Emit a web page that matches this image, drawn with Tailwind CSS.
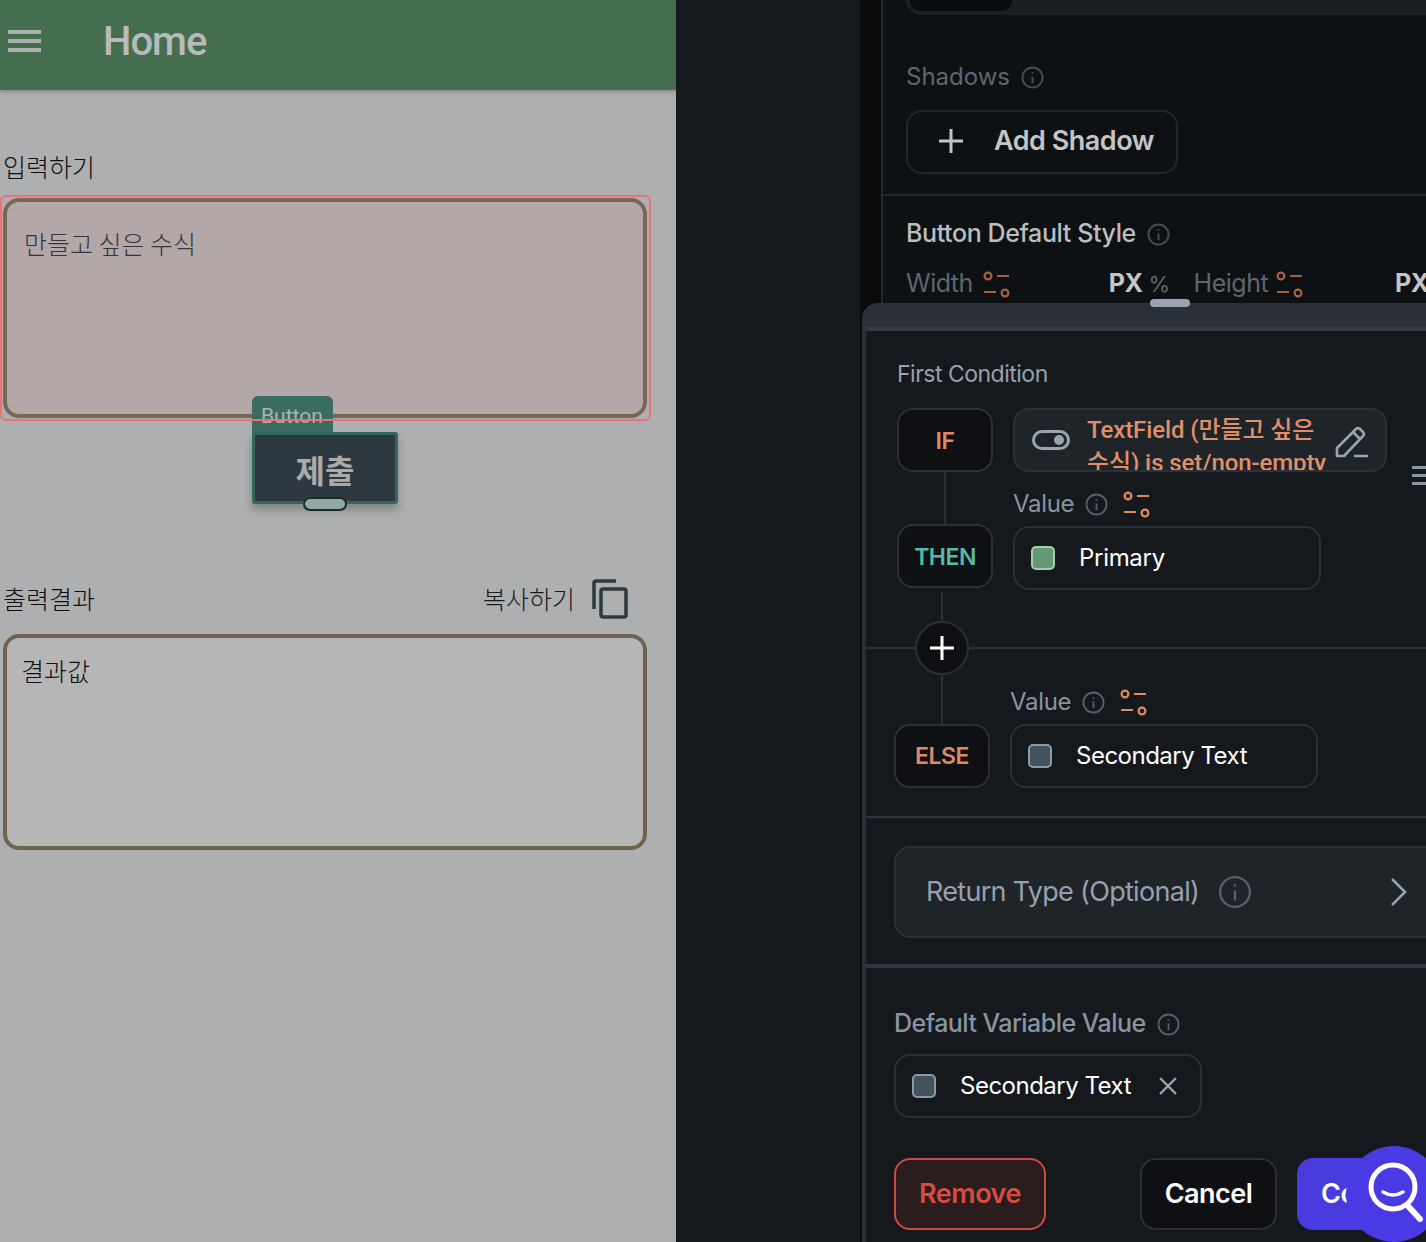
<!DOCTYPE html>
<html lang="en">
<head>
  <meta charset="UTF-8">
  <meta name="viewport" content="width=device-width, initial-scale=1.0">
  <title>Conditional Value</title>
  <script src="https://cdn.jsdelivr.net/npm/@tailwindcss/browser@4"></script>
</head>
<body class="bg-[#14191e]">
  <div class="relative flex w-[1426px] h-[1242px] overflow-hidden font-['Inter','Noto_Sans_CJK_KR',sans-serif] tracking-[-0.5px]">

    <!-- phone canvas -->
    <div class="w-[676px] shrink-0 bg-[#aeafb1] font-['Noto_Sans_CJK_KR',sans-serif] tracking-normal">
      <header class="flex items-center h-[90px] pb-2 bg-[#456e4f] shadow-[0_2px_4px_rgba(0,0,0,0.25)]">
        <div class="flex flex-col gap-[5px] ml-2 w-[33px]">
          <span class="h-1 bg-[#aeb0b2]"></span>
          <span class="h-1 bg-[#aeb0b2]"></span>
          <span class="h-1 bg-[#aeb0b2]"></span>
        </div>
        <h1 class="ml-[62px] pt-px text-[40px] font-medium tracking-[-1px] text-[#b8b9ba] font-['Roboto',sans-serif]">Home</h1>
      </header>

      <p class="mt-[57px] ml-[3px] text-[25px] leading-[38px] text-[#0e1012] font-light">입력하기</p>

      <div class="relative mt-[13px] ml-[3px] w-[644px] h-[220px] rounded-2xl border-4 border-[#7a6556] bg-[#b3a7a8] pl-[17px] pt-[23px]">
        <p class="text-[25px] leading-[36px] font-light text-[#34383c]">만들고 싶은 수식</p>
        <!-- selection outline -->
        <div class="absolute -left-[7px] -top-[7px] w-[651px] h-[226px] rounded-md border-2 border-[#f07075] z-20"></div>
        <!-- widget tag + button -->
        <div class="absolute left-[245px] top-[194px] w-[81px] h-[40px] rounded-t-md bg-[#3b6c62] pl-[9px] text-[21px] leading-[40px] text-[#a9b5b1] font-['Roboto',sans-serif] overflow-hidden z-10">Button</div>
        <div class="absolute left-[245px] top-[230px] flex items-center justify-center w-[146px] h-[72px] pt-[2px] rounded-[3px] border-[3px] border-[#32665e] bg-[#2d3840] text-[32px] font-bold text-[#aaaaaa] shadow-[0_6px_8px_rgba(0,0,0,0.25)] z-10">제출
          <span class="absolute left-[48px] top-[62px] w-[44px] h-[14px] rounded-full border-2 border-[#1d2a2b] bg-[#93a9a4]"></span>
        </div>
      </div>

      <div class="flex items-center mt-[161px] ml-[3px] h-[40px] w-[625px]">
        <p class="text-[25px] font-light text-[#0e1012]">출력결과</p>
        <p class="ml-auto text-[25px] font-light text-[#191d20]">복사하기</p>
        <svg class="ml-[17px]" width="36" height="40" viewBox="0 0 36 40" fill="none" stroke="#2d3a42" stroke-width="3.5">
          <path d="M2 30V4a2 2 0 0 1 2-2h20"/>
          <rect x="9" y="10" width="25" height="28" rx="2"/>
        </svg>
      </div>

      <div class="mt-[15px] ml-[3px] w-[644px] h-[216px] rounded-2xl border-4 border-[#6f6350] bg-[#b6b6b6] pl-[14px] pt-[14px]">
        <p class="text-[25px] leading-[36px] font-light text-[#0e1012]">결과값</p>
      </div>
    </div>

    <!-- middle gutter -->
    <div class="w-[184px] shrink-0 bg-[#14191e]"></div>
    <div class="w-[21px] shrink-0 bg-[#090b0d]"></div>

    <!-- properties panel -->
    <div class="relative flex-1 border-l-2 border-[#22272d] bg-[#0d1114]">
      <div class="relative ml-[23px] h-[15px] rounded-bl-2xl bg-[#1a1f23]">
        <div class="ml-1 w-[102px] h-[11px] rounded-b-xl bg-[#0a0c0f]"></div>
      </div>

      <div class="flex items-center gap-[11px] mt-[49px] ml-[23px] h-[26px]">
        <span class="text-[24px] tracking-normal text-[#5e6670]">Shadows</span>
        <svg width="23" height="23" viewBox="0 0 24 24" fill="none" stroke="#454c55" stroke-width="2"><circle cx="12" cy="12" r="10.5"/><path d="M12 11v7M12 6.5v1.5"/></svg>
      </div>

      <button class="flex items-center mt-[20px] ml-[23px] w-[272px] h-[64px] rounded-2xl border-2 border-[#21262c] pl-[30px] pb-[2px] text-[27px] font-semibold text-[#c4c5c7]">
        <svg width="26" height="26" viewBox="0 0 26 26" fill="none" stroke="#c4c5c7" stroke-width="3"><path d="M13 1v24M1 13h24"/></svg>
        <span class="ml-[30px]">Add Shadow</span>
      </button>

      <div class="mt-[20px] h-[2px] bg-[#21262c]"></div>

      <div class="flex items-center gap-[11px] mt-[23px] ml-[23px] h-[30px]">
        <span class="text-[25px] font-medium tracking-[-0.4px] text-[#bcbdc0]">Button Default Style</span>
        <svg width="23" height="23" viewBox="0 0 24 24" fill="none" stroke="#454c55" stroke-width="2"><circle cx="12" cy="12" r="10.5"/><path d="M12 11v7M12 6.5v1.5"/></svg>
      </div>

      <div class="flex items-center mt-[18px] ml-[23px] h-[34px] text-[25px] text-[#5e6670] whitespace-nowrap">
        <span>Width</span>
        <svg class="ml-[10px]" width="27" height="27" viewBox="0 0 27 27" fill="none" stroke="#a5623f" stroke-width="2.2"><circle cx="5" cy="5" r="3.4"/><path d="M14 5h12M1 21h12"/><circle cx="22" cy="22" r="3.4"/></svg>
        <span class="ml-[99px] font-bold text-[#c4c5c7]">PX</span>
        <span class="ml-[6px] text-[22px]">%</span>
        <span class="ml-[24px]">Height</span>
        <svg class="ml-[8px]" width="27" height="27" viewBox="0 0 27 27" fill="none" stroke="#a5623f" stroke-width="2.2"><circle cx="5" cy="5" r="3.4"/><path d="M14 5h12M1 21h12"/><circle cx="22" cy="22" r="3.4"/></svg>
        <span class="ml-[92px] font-bold text-[#c4c5c7]">PX</span>
      </div>
    </div>

    <!-- conditional value sheet -->
    <div class="absolute left-[862px] top-[303px] w-[564px] h-[939px] rounded-tl-2xl border-l-4 border-t-[24px] border-[#2a2f38] bg-[#15191d] overflow-hidden">
      <div class="h-1 bg-[#353a45]"></div>

      <div class="relative pl-[31px] pt-[28px] h-[487px] border-b-2 border-[#2f343e]">
        <p class="text-[23px] leading-[30px] text-[#98a0ae]">First Condition</p>

        <div class="flex gap-5 mt-[19px]">
          <div class="flex items-center justify-center w-[96px] h-[64px] pt-[2px] rounded-2xl border-2 border-[#2b3038] bg-[#0e1013] text-[23px] font-semibold text-[#df8a63]">IF</div>
          <div class="relative flex items-center w-[374px] h-[64px] rounded-2xl border-2 border-[#2b3038] bg-[#1f2429] overflow-hidden">
            <svg class="ml-[17px] shrink-0" width="38" height="20" viewBox="0 0 38 20" fill="none"><rect x="1.5" y="1.5" width="35" height="17" rx="8.5" stroke="#9aa3b2" stroke-width="3"/><circle cx="27" cy="10" r="5" fill="#9aa3b2"/></svg>
            <p class="ml-[17px] w-[240px] self-start pt-[4px] text-[24px] leading-[33px] font-medium font-['Roboto','Noto_Sans_CJK_KR',sans-serif] tracking-[-0.1px] text-[#df8f6a]">TextField (만들고 싶은 수식) is set/non-empty</p>
            <svg class="absolute left-[319px] top-[16px]" width="36" height="32" viewBox="0 0 36 32" fill="none" stroke="#9aa3b2" stroke-width="2.6" stroke-linejoin="round"><path d="M3 22 22 3a3 3 0 0 1 4 0l3 3a3 3 0 0 1 0 4L10 30H3zM19 6l7 7M20 30h14"/></svg>
          </div>
        </div>

        <!-- reorder handle at right edge -->
        <div class="absolute left-[546px] top-[135px] flex flex-col gap-[5px] w-[14px]">
          <span class="h-[3px] bg-[#8d96a3]"></span>
          <span class="h-[3px] bg-[#8d96a3]"></span>
          <span class="h-[3px] bg-[#8d96a3]"></span>
        </div>

        <div class="relative flex items-center gap-[11px] ml-[116px] h-[52px] pt-[12px] text-[24px] tracking-[-0.3px] text-[#8a93a0]">
          <span class="absolute -left-[69px] top-0 w-[2px] h-[52px] bg-[#2b3038]"></span>
          <span>Value</span>
          <svg width="23" height="23" viewBox="0 0 24 24" fill="none" stroke="#565e69" stroke-width="2"><circle cx="12" cy="12" r="10.5"/><path d="M12 11v7M12 6.5v1.5"/></svg>
          <svg class="ml-[4px]" width="27" height="27" viewBox="0 0 27 27" fill="none" stroke="#df8a63" stroke-width="2.2"><circle cx="5" cy="5" r="3.4"/><path d="M14 5h12M1 21h12"/><circle cx="22" cy="22" r="3.4"/></svg>
        </div>

        <div class="flex items-start gap-5">
          <div class="flex items-center justify-center w-[96px] h-[64px] pt-[2px] rounded-2xl border-2 border-[#2b3038] bg-[#0e1013] text-[23px] font-semibold text-[#53bba6]">THEN</div>
          <div class="flex items-center mt-[2px] w-[308px] h-[64px] rounded-2xl border-2 border-[#2b3038] pl-[16px] text-[24px] tracking-[-0.3px] text-white">
            <span class="w-6 h-6 rounded-[5px] border-2 border-[#a3cdb0] bg-[#639a73]"></span>
            <span class="ml-6">Primary</span>
          </div>
        </div>

        <div class="relative h-[134px]">
          <span class="absolute left-[-31px] right-0 top-[57px] h-[2px] bg-[#2b3038]"></span>
          <span class="absolute left-[44px] top-[2px] w-[2px] h-[132px] bg-[#2b3038]"></span>
          <span class="absolute left-[18px] top-[31px] flex items-center justify-center w-[54px] h-[54px] rounded-full border-2 border-[#2b3038] bg-[#0e1013]">
            <svg width="26" height="26" viewBox="0 0 26 26" fill="none" stroke="#ffffff" stroke-width="3"><path d="M13 1v24M1 13h24"/></svg>
          </span>
          <div class="absolute left-[113px] top-[97px] flex items-center gap-[11px] h-[30px] text-[24px] tracking-[-0.3px] text-[#8a93a0]">
            <span>Value</span>
            <svg width="23" height="23" viewBox="0 0 24 24" fill="none" stroke="#565e69" stroke-width="2"><circle cx="12" cy="12" r="10.5"/><path d="M12 11v7M12 6.5v1.5"/></svg>
            <svg class="ml-[4px]" width="27" height="27" viewBox="0 0 27 27" fill="none" stroke="#df8a63" stroke-width="2.2"><circle cx="5" cy="5" r="3.4"/><path d="M14 5h12M1 21h12"/><circle cx="22" cy="22" r="3.4"/></svg>
          </div>
        </div>

        <div class="flex gap-5 -ml-[3px]">
          <div class="flex items-center justify-center w-[96px] h-[64px] rounded-2xl border-2 border-[#2b3038] bg-[#0e1013] text-[23px] font-semibold text-[#df8a63]">ELSE</div>
          <div class="flex items-center w-[308px] h-[64px] rounded-2xl border-2 border-[#2b3038] pl-[16px] text-[24px] text-white">
            <span class="w-6 h-6 rounded-[5px] border-2 border-[#8d9aa3] bg-[#43535e]"></span>
            <span class="ml-6">Secondary Text</span>
          </div>
        </div>
      </div>

      <div class="h-[150px] pl-[28px] pt-[28px] border-b-4 border-[#2f343e]">
        <div class="flex items-center w-[560px] h-[92px] rounded-2xl border-2 border-[#2b3038] bg-[#1f2429] pl-[30px] text-[27px] tracking-[-0.7px] text-[#98a0ae]">
          <span>Return Type (Optional)</span>
          <svg class="ml-[19px]" width="34" height="34" viewBox="0 0 24 24" fill="none" stroke="#565e69" stroke-width="1.7"><circle cx="12" cy="12" r="10.5"/><path d="M12 11v7M12 6.5v1.5"/></svg>
          <svg class="ml-[137px]" width="19" height="30" viewBox="0 0 19 30" fill="none" stroke="#98a0ae" stroke-width="2.6"><path d="M3 2l13 13L3 28"/></svg>
        </div>
      </div>

      <div class="pl-[28px] pt-[41px]">
        <div class="flex items-center gap-[11px] h-[30px]">
          <span class="text-[25px] font-medium tracking-[-0.55px] text-[#8a93a0]">Default Variable Value</span>
          <svg width="23" height="23" viewBox="0 0 24 24" fill="none" stroke="#565e69" stroke-width="2"><circle cx="12" cy="12" r="10.5"/><path d="M12 11v7M12 6.5v1.5"/></svg>
        </div>
        <div class="flex items-center mt-[15px] w-[308px] h-[64px] rounded-2xl border-2 border-[#2b3038] pl-[16px] text-[24px] text-white">
          <span class="w-6 h-6 rounded-[5px] border-2 border-[#8d9aa3] bg-[#43535e]"></span>
          <span class="ml-6">Secondary Text</span>
          <svg class="ml-auto mr-[22px]" width="20" height="20" viewBox="0 0 20 20" fill="none" stroke="#9aa3b2" stroke-width="2.4"><path d="M2 2l16 16M18 2 2 18"/></svg>
        </div>
        <div class="flex mt-[40px]">
          <button class="shrink-0 w-[152px] h-[72px] rounded-2xl border-2 border-[#cb4b42] bg-[#2b1c1e] text-[27px] font-semibold text-[#d44c42]">Remove</button>
          <button class="shrink-0 ml-[94px] w-[137px] h-[72px] rounded-2xl border-2 border-[#2b3038] bg-[#0e1013] text-[27px] font-semibold text-white">Cancel</button>
          <button class="shrink-0 ml-5 w-[200px] h-[72px] rounded-2xl bg-[#4a3bdf] pl-6 text-left text-[27px] font-semibold text-white">Confirm</button>
        </div>
      </div>
    </div>

    <!-- drag pill on the sheet's top edge -->
    <div class="absolute left-[1150px] top-[299px] w-10 h-2 rounded-full bg-[#9aa3b2]"></div>

    <!-- floating search bubble -->
    <div class="absolute left-[1346px] top-[1146px] w-[96px] h-[96px] rounded-full bg-[#4a3ae4]">
      <svg width="96" height="96" viewBox="0 0 96 96" fill="none" stroke="#ffffff" stroke-linecap="round">
        <circle cx="47" cy="41" r="22" stroke-width="5"/>
        <path d="M37 46q10 6 20 0" stroke-width="3.5"/>
        <path d="M62 60l12 13" stroke-width="6"/>
      </svg>
    </div>
  </div>
</body>
</html>
